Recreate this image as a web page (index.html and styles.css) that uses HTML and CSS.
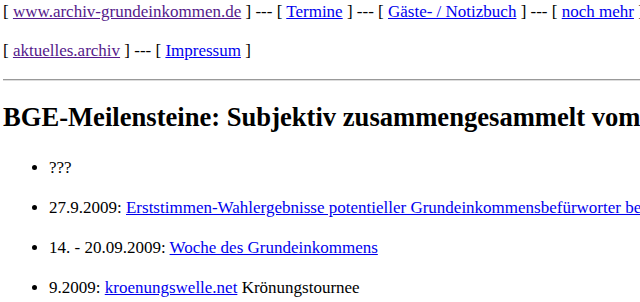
FILE: index.html
```html
<!DOCTYPE html>
<html lang="de">
<head>
  <meta charset="UTF-8" />
  <title>BGE-Meilensteine</title>
  <link rel="stylesheet" href="styles.css">
</head>
<body>
  <p class="nav">
    [ <a class="visited" href="#">www.archiv-grundeinkommen.de</a> ] --- [ <a href="#">Termine</a> ] --- [ <a href="#">Gäste- / Notizbuch</a> ] --- [ <a href="#">noch mehr</a> ]
  </p>
  <p class="nav">
    [ <a class="visited" href="#">aktuelles.archiv</a> ] --- [ <a href="#">Impressum</a> ]
  </p>
  <hr>
  <h1>BGE-Meilensteine: Subjektiv zusammengesammelt vom Archiv</h1>
  <ul class="milestones">
    <li><p>???</p></li>
    <li><p>27.9.2009: <a href="#">Erststimmen-Wahlergebnisse potentieller Grundeinkommensbefürworter bei der Bundestagswahl</a></p></li>
    <li><p>14. - 20.09.2009: <a href="#">Woche des Grundeinkommens</a></p></li>
    <li><p>9.2009: <a href="#">kroenungswelle.net</a> Krönungstournee</p></li>
  </ul>
</body>
</html>
```

FILE: styles.css
```css
html, body {
  overflow: hidden;
}

body {
  margin: 0;
  padding: 2px 0 0 3px;
  font-family: "Liberation Serif", "Times New Roman", serif;
  font-size: 17px;
  line-height: 20px;
  color: #000;
  background: #fff;
  white-space: nowrap;
}

a {
  color: #0000ee;
}

a.visited {
  color: #551a8b;
}

.nav {
  margin: 0;
}

.nav + .nav {
  margin-top: 19px;
}

hr {
  margin: 18px 0 21px;
  border: none;
  border-top: 1px solid #999;
  border-bottom: 1px solid #ddd;
}

h1 {
  font-size: 26.6px;
  line-height: 31px;
  margin: 0 0 25px;
}

.milestones {
  margin: 0;
  padding-left: 46px;
}

.milestones p {
  margin: 20px 0;
}
```
